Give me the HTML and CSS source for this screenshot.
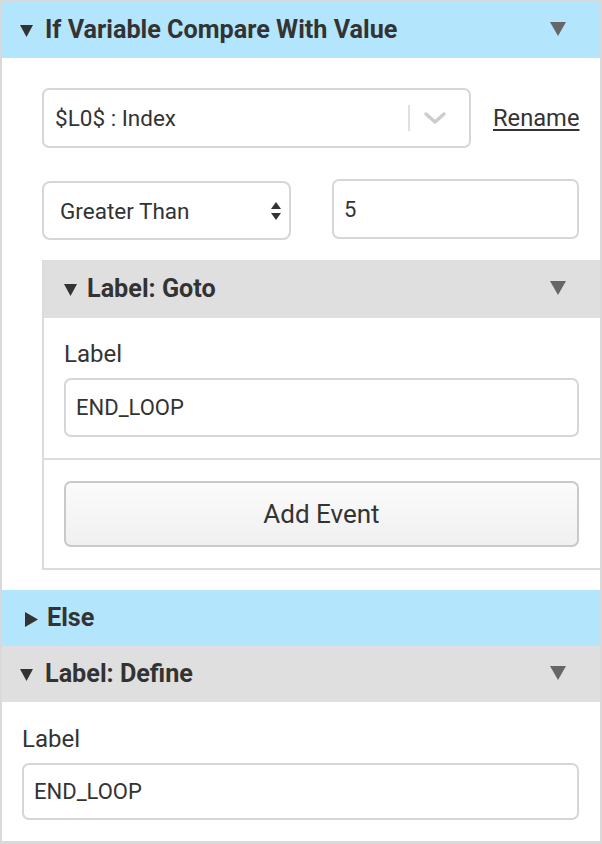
FILE: index.html
```html
<!DOCTYPE html>
<html>
<head>
<meta charset="utf-8">
<link rel="stylesheet" href="styles.css">
</head>
<body>
<div class="root">
  <div class="hdr hdr-blue">
    <svg class="tri-down" width="13" height="12" viewBox="0 0 13 12"><polygon points="0,0 13,0 6.5,12" fill="#333"/></svg>
    <span class="hdr-title">If Variable Compare With Value</span>
    <svg class="menu-tri" width="16" height="14" viewBox="0 0 16 14"><polygon points="0,0 16,0 8,14" fill="#666"/></svg>
  </div>
  <div class="panel">
    <div class="row1">
      <div class="rselect">
        <span class="rselect-val">$L0$ : Index</span>
        <span class="rselect-sep"></span>
        <svg class="chev" width="24" height="14" viewBox="0 0 24 14"><polyline points="3,3 12,11 21,3" fill="none" stroke="#ccc" stroke-width="3.4" stroke-linecap="round" stroke-linejoin="round"/></svg>
      </div>
      <span class="rename">Rename</span>
    </div>
    <div class="row2">
      <div class="nselect">
        <span>Greater Than</span>
        <svg class="updown" width="10" height="18" viewBox="0 0 10 18"><polygon points="5,0 10,7 0,7" fill="#333"/><polygon points="0,11 10,11 5,18" fill="#333"/></svg>
      </div>
      <div class="input">5</div>
    </div>
    <div class="block">
      <div class="hdr hdr-gray hdr-sub">
        <svg class="tri-down" width="13" height="12" viewBox="0 0 13 12"><polygon points="0,0 13,0 6.5,12" fill="#333"/></svg>
        <span class="hdr-title">Label: Goto</span>
        <svg class="menu-tri" width="16" height="14" viewBox="0 0 16 14"><polygon points="0,0 16,0 8,14" fill="#666"/></svg>
      </div>
      <div class="fields">
        <div class="lbl">Label</div>
        <div class="input wide">END_LOOP</div>
      </div>
      <div class="btn-area">
        <div class="btn">Add Event</div>
      </div>
    </div>
  </div>
  <div class="hdr hdr-blue hdr-else">
    <svg class="tri-right" width="13" height="15" viewBox="0 0 13 15"><polygon points="0,0 13,7.5 0,15" fill="#333"/></svg>
    <span class="hdr-title">Else</span>
  </div>
  <div class="hdr hdr-gray">
    <svg class="tri-down" width="13" height="12" viewBox="0 0 13 12"><polygon points="0,0 13,0 6.5,12" fill="#333"/></svg>
    <span class="hdr-title">Label: Define</span>
    <svg class="menu-tri" width="16" height="14" viewBox="0 0 16 14"><polygon points="0,0 16,0 8,14" fill="#666"/></svg>
  </div>
  <div class="fields define">
    <div class="lbl">Label</div>
    <div class="input wide">END_LOOP</div>
  </div>
</div>
</body>
</html>
```

FILE: styles.css
```css
* { box-sizing: border-box; }
html, body { margin: 0; padding: 0; background: #fff; }
body {
  font-family: Roboto, "Liberation Sans", sans-serif;
  color: #333;
}
.root {
  width: 602px;
  height: 844px;
  border: 2px solid #d9d9d9;
  border-bottom-width: 3px;
  overflow: hidden;
}
.hdr {
  height: 56px;
  display: flex;
  align-items: center;
  padding-left: 18px;
  padding-right: 34px;
}
.hdr-blue { background: #b3e5fc; }
.hdr-gray { background: #dfdfdf; }
.hdr-sub { height: 58px; padding-left: 20px; }
.hdr-sub .hdr-title { margin-left: 10px; }
.hdr-title {
  font-size: 25.2px;
  line-height: 28px;
  font-weight: 700;
  color: #333;
  margin-left: 12px;
  flex: 1;
}
.tri-down { margin-top: 2px; flex: none; }
.tri-right { margin-left: 5px; margin-top: 2px; flex: none; }
.hdr-else .hdr-title { margin-left: 9px; }
.menu-tri { flex: none; margin-top: -2px; }
.panel {
  margin-left: 20px;
  background: #fff;
  padding: 30px 0 20px 20px;
}
.row1 {
  display: flex;
  align-items: center;
  margin-right: 20px;
}
.rselect {
  width: 429px;
  height: 60px;
  border: 2px solid #d6d6d6;
  border-radius: 7px;
  display: flex;
  align-items: center;
  padding-left: 11px;
}
.rselect-val { flex: 1; font-size: 22.5px; }
.rselect-sep {
  width: 2px;
  height: 26px;
  background: #e0e0e0;
}
.chev { margin: 0 22px 0 13px; }
.rename {
  margin-left: 22px;
  font-size: 23.7px;
  text-decoration: underline;
  text-decoration-thickness: 2px;
  text-underline-offset: 3px;
}
.row2 {
  display: grid;
  grid-template-columns: 249px 247px;
  column-gap: 41px;
  margin-top: 31px;
  margin-right: 20px;
  align-items: start;
}
.nselect {
  height: 59px;
  margin-top: 2px;
  border: 2px solid #d6d6d6;
  border-radius: 8px;
  display: flex;
  align-items: center;
  justify-content: space-between;
  padding: 0 8px 0 16px;
  font-size: 22.5px;
}
.input {
  height: 60px;
  border: 2px solid #d6d6d6;
  border-radius: 7px;
  display: flex;
  align-items: center;
  padding-left: 10px;
  font-size: 22px;
}
.input.wide { height: 59px; }
.block {
  margin-top: 20px;
  border-left: 2px solid #dcdcdc;
  border-bottom: 2px solid #dcdcdc;
}
.fields {
  padding: 23px 21px 21px 20px;
  border-bottom: 2px solid #dcdcdc;
}
.lbl {
  font-size: 24px;
  line-height: 26px;
  margin-bottom: 11px;
}
.btn-area { padding: 21px 21px 21px 20px; }
.btn {
  height: 66px;
  border: 2px solid #c9c9c9;
  border-radius: 7px;
  background: linear-gradient(#fbfbfb, #f0f0f0);
  display: flex;
  align-items: center;
  justify-content: center;
  font-size: 26px;
}
.define {
  border-bottom: none;
  padding-top: 24px;
  padding-left: 20px;
}
.define .input { height: 57px; }
```
